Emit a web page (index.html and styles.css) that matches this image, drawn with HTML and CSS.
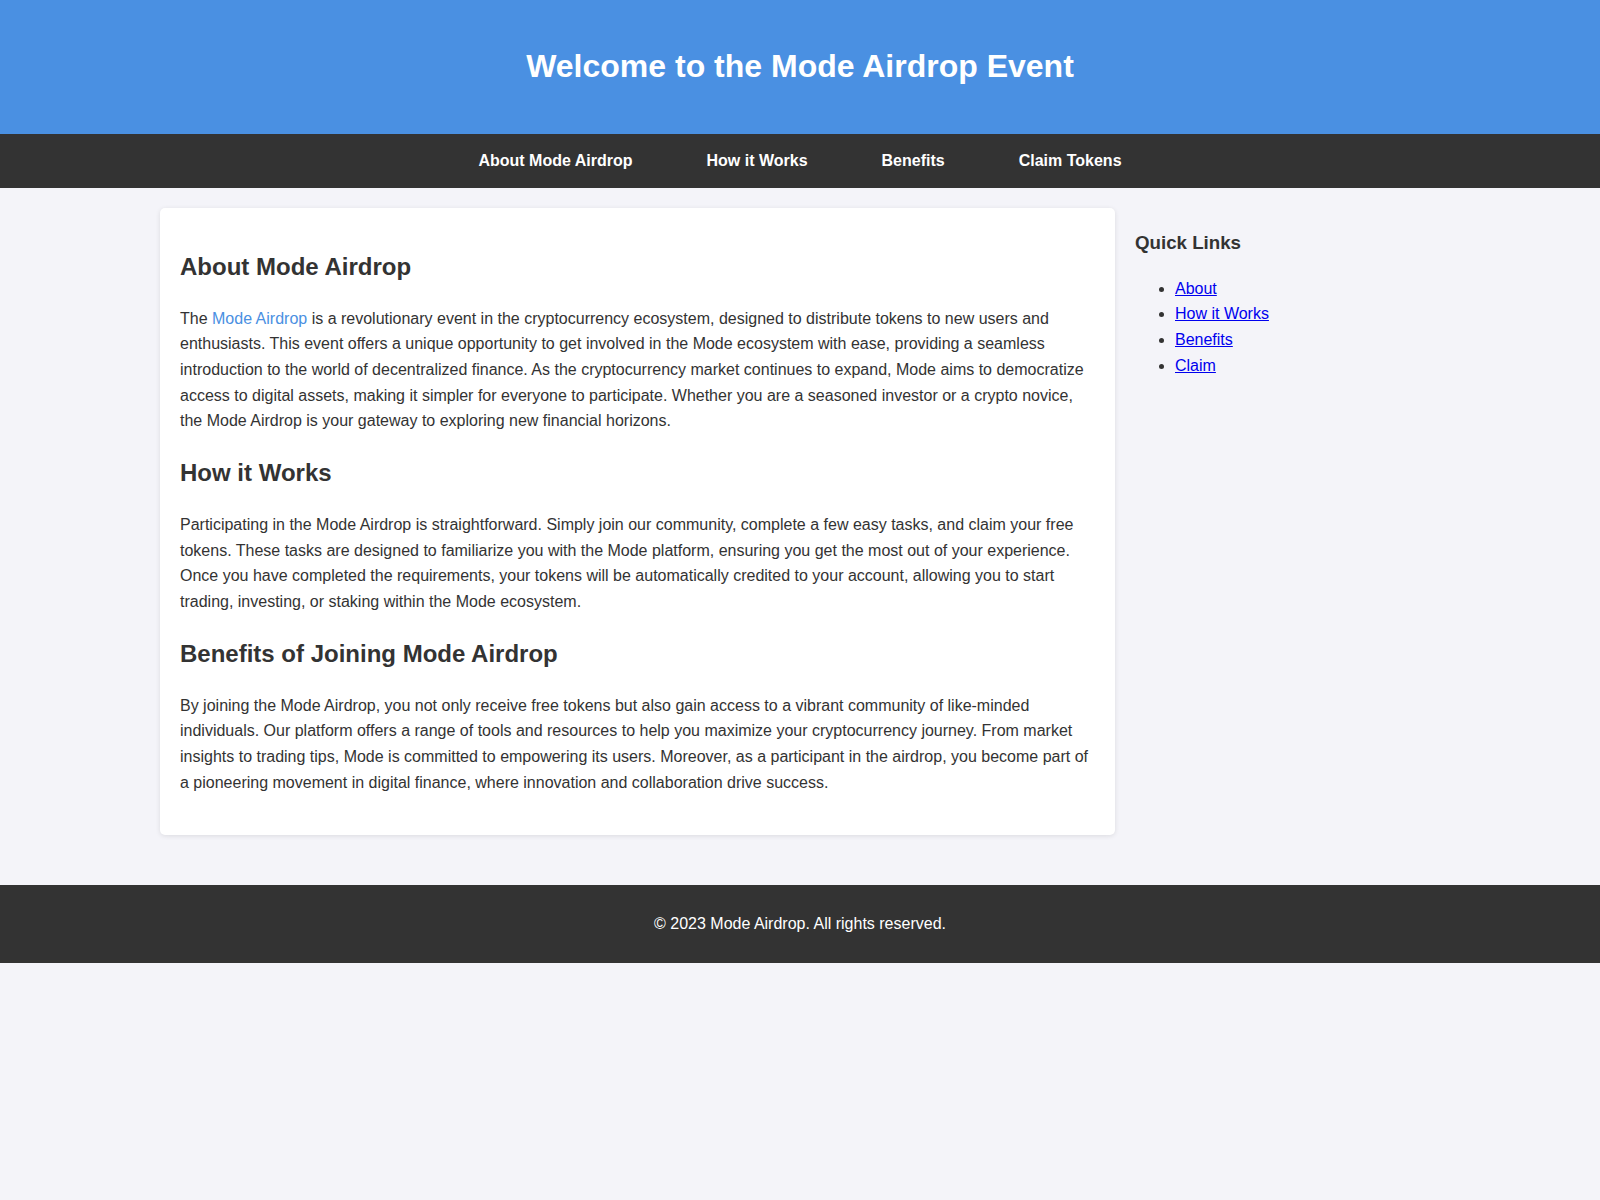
FILE: index.html
```html
<!DOCTYPE html>
<html lang="en">
<head>
  <meta charset="UTF-8" />
  <meta name="viewport" content="width=device-width, initial-scale=1.0"/>
  <title>Mode Airdrop Event</title>
  <link rel="stylesheet" href="styles.css">
</head>
<body>
  <header>
    <h1>Welcome to the Mode Airdrop Event</h1>
  </header>

  <nav>
    <a href="#about">About Mode Airdrop</a>
    <a href="#how">How it Works</a>
    <a href="#benefits">Benefits</a>
    <a href="#claim">Claim Tokens</a>
  </nav>

  <div class="container">
    <main class="content">
      <section id="about">
        <h2>About Mode Airdrop</h2>
        <p>The <a href="#" class="inline-link">Mode Airdrop</a> is a revolutionary event in the cryptocurrency ecosystem, designed to distribute tokens to new users and enthusiasts. This event offers a unique opportunity to get involved in the Mode ecosystem with ease, providing a seamless introduction to the world of decentralized finance. As the cryptocurrency market continues to expand, Mode aims to democratize access to digital assets, making it simpler for everyone to participate. Whether you are a seasoned investor or a crypto novice, the Mode Airdrop is your gateway to exploring new financial horizons.</p>
      </section>

      <section id="how">
        <h2>How it Works</h2>
        <p>Participating in the Mode Airdrop is straightforward. Simply join our community, complete a few easy tasks, and claim your free tokens. These tasks are designed to familiarize you with the Mode platform, ensuring you get the most out of your experience. Once you have completed the requirements, your tokens will be automatically credited to your account, allowing you to start trading, investing, or staking within the Mode ecosystem.</p>
      </section>

      <section id="benefits">
        <h2>Benefits of Joining Mode Airdrop</h2>
        <p>By joining the Mode Airdrop, you not only receive free tokens but also gain access to a vibrant community of like-minded individuals. Our platform offers a range of tools and resources to help you maximize your cryptocurrency journey. From market insights to trading tips, Mode is committed to empowering its users. Moreover, as a participant in the airdrop, you become part of a pioneering movement in digital finance, where innovation and collaboration drive success.</p>
      </section>
    </main>

    <aside class="sidebar">
      <h3>Quick Links</h3>
      <ul>
        <li><a href="#about">About</a></li>
        <li><a href="#how">How it Works</a></li>
        <li><a href="#benefits">Benefits</a></li>
        <li><a href="#claim">Claim</a></li>
      </ul>
    </aside>
  </div>

  <footer>
    <p>&copy; 2023 Mode Airdrop. All rights reserved.</p>
  </footer>
</body>
</html>
```

FILE: styles.css
```css
body {
  font-family: 'Liberation Sans', Arial, sans-serif;
  margin: 0;
  padding: 0;
  line-height: 1.6;
  background-color: #f4f4f9;
  color: #333;
}

header {
  background-color: #4a90e2;
  color: white;
  padding: 20px;
  text-align: center;
}

header h1 {
  font-size: 32px;
  margin: 21.44px 0;
}

nav {
  background-color: #333;
  display: flex;
  justify-content: center;
  gap: 74px;
  padding: 14px 0;
}

nav a {
  color: white;
  text-decoration: none;
  font-weight: bold;
}

.container {
  max-width: 1280px;
  margin: 20px auto 0;
  display: grid;
  grid-template-columns: 955px 1fr;
  align-items: start;
}

.content {
  background-color: #fff;
  padding: 20px;
  border-radius: 5px;
  box-shadow: 0 1px 5px rgba(0, 0, 0, 0.1);
}

.content section {
  margin-bottom: 20px;
}

.content h2 {
  font-size: 24px;
  margin: 19.92px 0;
}

.inline-link {
  color: #4a90e2;
  text-decoration: none;
}

.sidebar {
  padding: 2px 20px 0;
}

.sidebar h3 {
  font-size: 18.72px;
  margin: 18.72px 0 17.5px;
}

footer {
  background-color: #333;
  color: white;
  text-align: center;
  padding: 10px;
  margin-top: 50px;
}
```
